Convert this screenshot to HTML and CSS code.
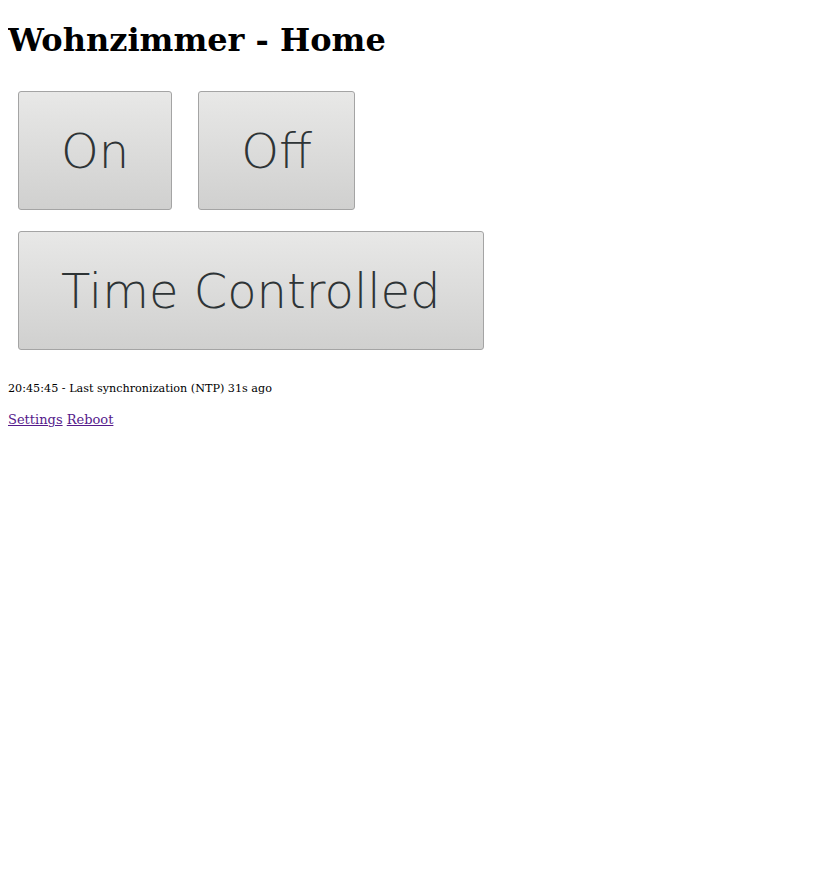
FILE: index.html
```html
<!DOCTYPE html>
<html>
<head>
<meta charset="utf-8">
<title>Wohnzimmer - Home</title>
<link rel="stylesheet" href="styles.css">
</head>
<body>
<h1 class="title">Wohnzimmer - Home</h1>
<div class="controls">
  <div class="row">
    <button class="btn">On</button>
    <button class="btn">Off</button>
  </div>
  <div class="row">
    <button class="btn">Time Controlled</button>
  </div>
</div>
<p class="status">20:45:45 - Last synchronization (NTP) 31s ago</p>
<p class="links"><a href="#settings" class="link">Settings</a> <a href="#reboot" class="link">Reboot</a></p>
</body>
</html>
```

FILE: styles.css
```css
body {
  margin: 8px;
  font-family: "DejaVu Serif", serif;
  font-size: 16px;
  background: #fff;
  color: #000;
}
.title {
  font-size: 32px;
  font-weight: bold;
  margin: 14px 0 0 0;
  line-height: 37px;
}
.controls {
  display: flex;
  flex-direction: column;
  gap: 21px;
  padding: 32px 0 0 10px;
}
.row {
  display: flex;
  gap: 26px;
}
.btn {
  font-family: "DejaVu Sans", sans-serif;
  font-weight: 200;
  font-size: 48px;
  color: #2e3436;
  height: 119px;
  padding: 0 42px;
  border: 1px solid #a4a4a4;
  border-radius: 3px;
  background: linear-gradient(to bottom, #e8e8e7, #d0d0cf);
  cursor: pointer;
}
.status {
  font-size: 11.2px;
  margin: 32px 0 0 0;
}
.links {
  margin: 17px 0 0 0;
  font-size: 13px;
}
.link {
  color: #551a8b;
}
```
